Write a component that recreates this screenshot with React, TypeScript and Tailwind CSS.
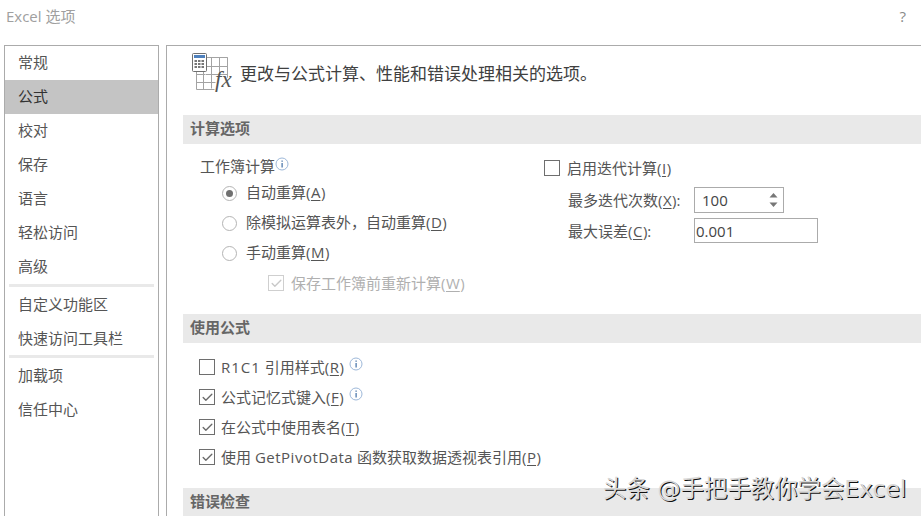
import { Check } from "lucide-react";
import type { ReactNode } from "react";

const font = "font-['Open_Sans','Noto_Sans_CJK_SC',sans-serif]";

function Info() {
  return (
    <svg width="14" height="14" viewBox="0 0 14 14" className="shrink-0">
      <circle cx="7" cy="7" r="6" fill="white" stroke="#9db8d9" strokeWidth="1" />
      <rect x="6.5" y="3.5" width="1.2" height="1.3" fill="#3f6ea5" />
      <rect x="6.5" y="6" width="1.2" height="4.5" fill="#3f6ea5" />
    </svg>
  );
}

function Key({ children }: { children: ReactNode }) {
  return <span className="px-[0.5px] underline underline-offset-2">{children}</span>;
}

function Radio({ on, children }: { on?: boolean; children: ReactNode }) {
  return (
    <div className="flex h-[30px] items-center gap-[9px] pl-[39px]">
      <span className="flex h-[15px] w-[15px] items-center justify-center rounded-full border border-[#b4b4b4] bg-white">
        {on && <span className="h-[7px] w-[7px] rounded-full bg-[#707070]" />}
      </span>
      <span className="mb-[2px]">{children}</span>
    </div>
  );
}

function Box({ on, off }: { on?: boolean; off?: boolean }) {
  return (
    <span className={`flex h-[16px] w-[16px] shrink-0 items-center justify-center border bg-white ${off ? "border-[#cfcfcf]" : "border-[#6e6e6e]"}`}>
      {on && <Check size={13} strokeWidth={2.5} color={off ? "#c8c8c8" : "#6a6a6a"} />}
    </span>
  );
}

function CheckRow({ on, children, info }: { on?: boolean; children: ReactNode; info?: boolean }) {
  return (
    <div className="flex h-[30px] items-center pl-[16px]">
      <Box on={on} />
      <span className="ml-[6px]">{children}</span>
      {info && <span className="mb-[6px] ml-[5px]"><Info /></span>}
    </div>
  );
}

function SectionHead({ children }: { children: ReactNode }) {
  return (
    <div className="flex h-[29px] items-center bg-[#e9e9e9] pb-[3px] pl-[7px] font-bold text-[#666666]">{children}</div>
  );
}

function FxIcon() {
  return (
    <svg width="42" height="42" viewBox="0 0 42 42" className="shrink-0 overflow-visible">
      <path
        d="M14 5.5h21.5v20M14 14.5h21.5M14 22.5h21.5M19.5 5.5v31M27.5 5.5v16M35.5 5.5v20M4.5 19v18.5h18M11.5 19v18.5M4.5 30.5h19M4.5 22.5h9"
        fill="none"
        stroke="#a3a3a3"
      />
      <rect x="0.5" y="1.5" width="14" height="18" rx="1" fill="white" stroke="#6f6f6f" />
      <rect x="2" y="3" width="11" height="3" fill="#4f81bd" />
      <path d="M2.5 8h2.5v2H2.5zM6 8h2.5v2H6zM9.5 8h2.5v2H9.5zM2.5 11h2.5v2H2.5zM6 11h2.5v2H6zM9.5 11h2.5v2H9.5zM2.5 14h2.5v2H2.5zM6 14h2.5v2H6zM9.5 14h2.5v2H9.5z" fill="#777777" />
      <text x="23" y="35" fill="#555555" fontSize="23" fontStyle="italic" fontFamily="'Liberation Serif',serif">fx</text>
    </svg>
  );
}

function SpinArrows() {
  return (
    <svg width="9" height="16" viewBox="0 0 9 16" fill="#777777">
      <path d="M4.5 1 8.5 5.5H.5zM.5 10.5h8L4.5 15z" />
    </svg>
  );
}

const navTop = ["常规", "公式", "校对", "保存", "语言", "轻松访问", "高级"];

function NavItem({ label, active }: { label: string; active?: boolean }) {
  return (
    <div className={`flex h-[34px] items-center pb-[2px] pl-[13px] ${active ? "bg-[#c4c4c4] text-[#333333]" : ""}`}>{label}</div>
  );
}

export default function App() {
  return (
    <div className={`relative h-[516px] w-[921px] overflow-hidden bg-white text-[15px] leading-[20px] text-[#555555] ${font}`}>
      <div className="flex h-[45px] items-start justify-between pt-[6px] pl-[6px] pr-[15px]">
        <span className="text-[#a0a0a0]">Excel 选项</span>
        <span className="text-[#8a8a8a]">?</span>
      </div>

      <div className="flex h-[471px] gap-[7px] pl-[4px]">
        <nav className="w-[155px] shrink-0 border-x border-t border-[#ababab]">
          {navTop.map((item) => (
            <NavItem key={item} label={item} active={item === "公式"} />
          ))}
          <div className="mx-[4px] mb-[1px] h-[3px] bg-[#e9e9e9]" />
          <NavItem label="自定义功能区" />
          <NavItem label="快速访问工具栏" />
          <div className="mx-[4px] mb-[1px] -mt-[1px] h-[3px] bg-[#e9e9e9]" />
          <NavItem label="加载项" />
          <NavItem label="信任中心" />
        </nav>

        <main className="flex-1 border-l border-t border-[#ababab] pl-[16px]">
          <div className="flex h-[69px] items-start pt-[6px] pl-[9px]">
            <FxIcon />
            <span className="mt-[12px] ml-[6px] text-[17px] text-[#404040]">更改与公式计算、性能和错误处理相关的选项。</span>
          </div>

          <SectionHead>计算选项</SectionHead>

          <div className="flex h-[170px]">
            <div className="w-[361px] pt-[10px]">
              <div className="flex h-[24px] items-center pl-[17px]">
                <span>工作簿计算</span>
                <span className="mb-[4px]"><Info /></span>
              </div>
              <Radio on>自动重算(<Key>A</Key>)</Radio>
              <Radio>除模拟运算表外，自动重算(<Key>D</Key>)</Radio>
              <Radio>手动重算(<Key>M</Key>)</Radio>
              <div className="flex h-[30px] items-center gap-[7px] pl-[85px] text-[#b0b0b0]">
                <Box on off />
                <span>保存工作簿前重新计算(<Key>W</Key>)</span>
              </div>
            </div>

            <div className="pt-[9px]">
              <div className="flex h-[30px] items-center gap-[7px]">
                <Box />
                <span>启用迭代计算(<Key>I</Key>)</span>
              </div>
              <div className="mt-[4px] flex h-[26px] items-center pl-[24px]">
                <span className="w-[126px]">最多迭代次数(<Key>X</Key>):</span>
                <div className="flex h-[26px] w-[90px] items-center justify-between border border-[#ababab] pl-[7px] pr-[5px] text-[#444444]">
                  <span>100</span>
                  <SpinArrows />
                </div>
              </div>
              <div className="mt-[5px] flex h-[25px] items-center pl-[24px]">
                <span className="w-[126px]">最大误差(<Key>C</Key>):</span>
                <div className="flex h-[25px] w-[124px] items-center border border-[#ababab] pl-[1px] text-[#444444]">0.001</div>
              </div>
            </div>
          </div>

          <SectionHead>使用公式</SectionHead>

          <div className="h-[145px] pt-[9px]">
            <CheckRow info><span className="tracking-[1px]">R1C1</span> 引用样式(<Key>R</Key>)</CheckRow>
            <CheckRow on info>公式记忆式键入(<Key>F</Key>)</CheckRow>
            <CheckRow on>在公式中使用表名(<Key>T</Key>)</CheckRow>
            <CheckRow on>使用 <span className="tracking-[0.5px]">GetPivotData</span> 函数获取数据透视表引用(<Key>P</Key>)</CheckRow>
          </div>

          <SectionHead>错误检查</SectionHead>
        </main>
      </div>

      <span className="absolute left-[603px] top-[474px] font-['DejaVu_Sans','Noto_Sans_CJK_SC',sans-serif] text-[23.4px] leading-[30px] text-[#d8d8d8] [text-shadow:1px_1px_0_#111111]">
        头条 @手把手教你学会Excel
      </span>
    </div>
  );
}
